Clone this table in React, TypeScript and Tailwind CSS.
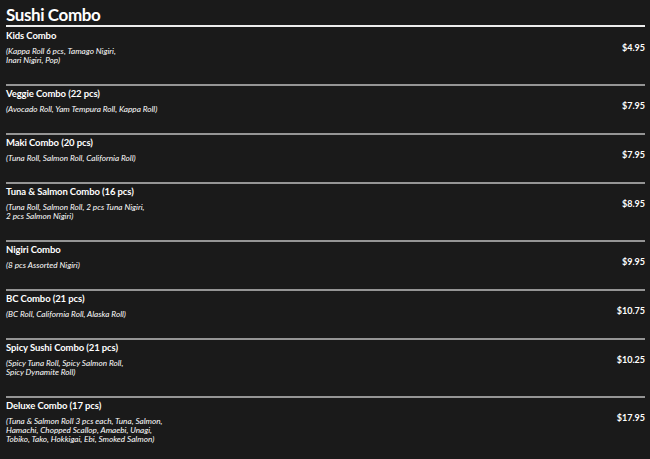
const items = [
  { name: "Kids Combo", desc: ["(Kappa Roll 6 pcs, Tamago Nigiri,", "Inari Nigiri, Pop)"], price: "$4.95" },
  { name: "Veggie Combo (22 pcs)", desc: ["(Avocado Roll, Yam Tempura Roll, Kappa Roll)"], price: "$7.95" },
  { name: "Maki Combo (20 pcs)", desc: ["(Tuna Roll, Salmon Roll, California Roll)"], price: "$7.95" },
  {
    name: "Tuna & Salmon Combo (16 pcs)",
    desc: ["(Tuna Roll, Salmon Roll, 2 pcs Tuna Nigiri,", "2 pcs Salmon Nigiri)"],
    price: "$8.95",
  },
  { name: "Nigiri Combo", desc: ["(8 pcs Assorted Nigiri)"], price: "$9.95" },
  { name: "BC Combo (21 pcs)", desc: ["(BC Roll, California Roll, Alaska Roll)"], price: "$10.75" },
  {
    name: "Spicy Sushi Combo (21 pcs)",
    desc: ["(Spicy Tuna Roll, Spicy Salmon Roll,", "Spicy Dynamite Roll)"],
    price: "$10.25",
  },
  {
    name: "Deluxe Combo (17 pcs)",
    desc: [
      "(Tuna & Salmon Roll 3 pcs each, Tuna, Salmon,",
      "Hamachi, Chopped Scallop, Amaebi, Unagi,",
      "Tobiko, Tako, Hokkigai, Ebi, Smoked Salmon)",
    ],
    price: "$17.95",
  },
];

export default function App() {
  return (
    <div className="h-[459px] w-[650px] overflow-hidden bg-[#1a1a1a] pl-[6px] pr-[5px] pt-[5px] text-white font-['Lato',sans-serif]">
      <h1 className="border-b-2 border-[#ededed] pb-[1px] text-[17px] font-bold leading-[19px] tracking-[-0.4px]">
        Sushi Combo
      </h1>

      {items.map((item, i) => (
        <div
          key={item.name}
          className={i === 0 ? "pt-[3px] pb-[19px]" : "border-t-2 border-[#959595] pt-[2px] pb-[19px]"}
        >
          <div className="text-[9.5px] font-bold leading-[12px] tracking-[-0.1px]">{item.name}</div>
          <div className="mt-[5px] flex items-start justify-between">
            <div className="text-[8.2px] italic leading-[9px]">
              {item.desc.map((d) => (
                <div key={d}>{d}</div>
              ))}
            </div>
            <div className="-mt-[5px] text-[9px] font-bold leading-[11px]">{item.price}</div>
          </div>
        </div>
      ))}
    </div>
  );
}
